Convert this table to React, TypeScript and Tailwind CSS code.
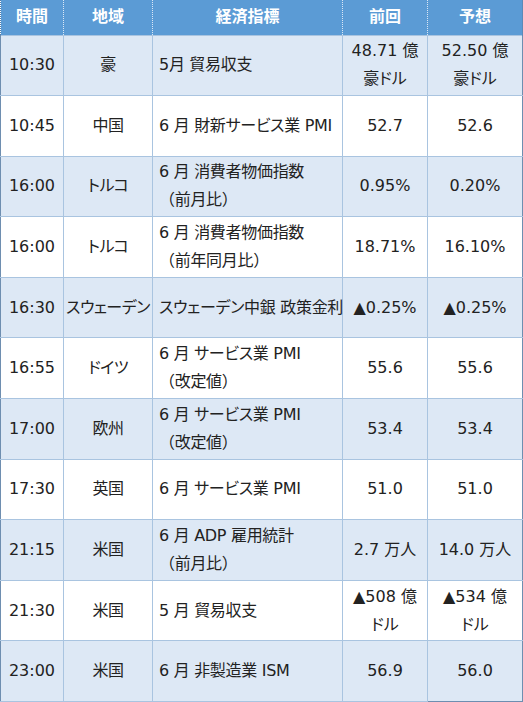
const rows: { time: string; area: string; item: string[]; prev: string[]; fcst: string[] }[] = [
  { time: "10:30", area: "豪", item: ["5月 貿易収支"], prev: ["48.71 億", "豪ドル"], fcst: ["52.50 億", "豪ドル"] },
  { time: "10:45", area: "中国", item: ["6 月 財新サービス業 PMI"], prev: ["52.7"], fcst: ["52.6"] },
  { time: "16:00", area: "トルコ", item: ["6 月 消費者物価指数", "（前月比）"], prev: ["0.95%"], fcst: ["0.20%"] },
  { time: "16:00", area: "トルコ", item: ["6 月 消費者物価指数", "（前年同月比）"], prev: ["18.71%"], fcst: ["16.10%"] },
  { time: "16:30", area: "スウェーデン", item: ["スウェーデン中銀 政策金利"], prev: ["▲0.25%"], fcst: ["▲0.25%"] },
  { time: "16:55", area: "ドイツ", item: ["6 月 サービス業 PMI", "（改定値）"], prev: ["55.6"], fcst: ["55.6"] },
  { time: "17:00", area: "欧州", item: ["6 月 サービス業 PMI", "（改定値）"], prev: ["53.4"], fcst: ["53.4"] },
  { time: "17:30", area: "英国", item: ["6 月 サービス業 PMI"], prev: ["51.0"], fcst: ["51.0"] },
  { time: "21:15", area: "米国", item: ["6 月 ADP 雇用統計", "（前月比）"], prev: ["2.7 万人"], fcst: ["14.0 万人"] },
  { time: "21:30", area: "米国", item: ["5 月 貿易収支"], prev: ["▲508 億", "ドル"], fcst: ["▲534 億", "ドル"] },
  { time: "23:00", area: "米国", item: ["6 月 非製造業 ISM"], prev: ["56.9"], fcst: ["56.0"] },
];

// kana in the original font are narrow, so use proportional widths
const palt = { fontFeatureSettings: '"palt"' };

const Lines = ({ lines }: { lines: string[] }) => (
  <>
    {lines.map((l, i) => (
      <div key={i} className="whitespace-nowrap" style={l.startsWith("（") ? undefined : palt}>
        {l}
      </div>
    ))}
  </>
);

export default function App() {
  return (
    <div
      className="w-[523px] h-[702px] bg-white overflow-hidden"
      style={{ fontFamily: '"DejaVu Sans", "Noto Sans CJK JP", sans-serif' }}
    >
      <table className="table-fixed border-collapse w-[522px] text-[16px] leading-[28px] text-[#222]">
        <colgroup>
          <col className="w-[63px]" />
          <col className="w-[89px]" />
          <col className="w-[190px]" />
          <col className="w-[85px]" />
          <col className="w-[95px]" />
        </colgroup>
        <thead>
          <tr className="h-[35px] bg-[#5b9bd5] text-white font-bold text-[16px]">
            <th className="border-r border-dotted border-r-[#dbe8f6] border-l border-l-[#4f7fae]">時間</th>
            <th className="border-r border-dotted border-r-[#dbe8f6]">地域</th>
            <th className="border-r border-dotted border-r-[#dbe8f6]">経済指標</th>
            <th className="border-r border-dotted border-r-[#dbe8f6]">前回</th>
            <th className="border-r border-r-[#5b8ab8]">予想</th>
          </tr>
        </thead>
        <tbody>
          {rows.map((r, i) => (
            <tr
              key={i}
              className={`h-[60.6px] ${i % 2 === 0 ? "bg-[#dde8f5]" : "bg-white"}`}
            >
              <td className="border border-[#a9c4e0] border-l-[#6e8eb0] text-center">{r.time}</td>
              <td className="border border-[#a9c4e0] text-center whitespace-nowrap tracking-[-0.5px]" style={palt}>
                {r.area}
              </td>
              <td className="border border-[#a9c4e0] pl-[6px] tracking-[-0.3px]">
                <Lines lines={r.item} />
              </td>
              <td className="border border-[#a9c4e0] text-center">
                <Lines lines={r.prev} />
              </td>
              <td
                className={`border border-[#a9c4e0] border-r-[#6e8eb0] text-center ${
                  i === rows.length - 1 ? "border-b-[#6e8eb0]" : ""
                }`}
              >
                <Lines lines={r.fcst} />
              </td>
            </tr>
          ))}
        </tbody>
      </table>
    </div>
  );
}
